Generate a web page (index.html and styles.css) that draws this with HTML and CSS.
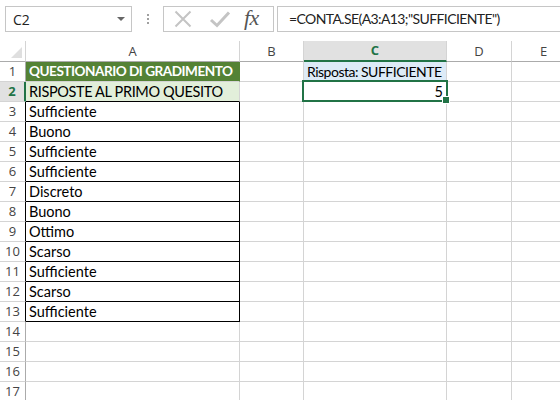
FILE: index.html
```html
<!DOCTYPE html>
<html>
<head>
<meta charset="utf-8">
<link rel="stylesheet" href="styles.css">
</head>
<body>
<div class="topbar">
  <div class="namebox"><span class="nb-text">C2</span><span class="nb-arrow"></span></div>
  <div class="dots"><i></i><i></i><i></i></div>
  <div class="fxbox">
    <svg class="ic-x" width="18" height="18" viewBox="0 0 18 18"><path d="M1.5 1.5L16.5 16.5M16.5 1.5L1.5 16.5" stroke="#c4c4c4" stroke-width="2" fill="none"/></svg>
    <svg class="ic-check" width="22" height="18" viewBox="0 0 22 18"><path d="M2 10L8 15.5L20 2.5" stroke="#c4c4c4" stroke-width="3" fill="none"/></svg>
    <span class="fx">fx</span>
  </div>
  <div class="formula">=CONTA.SE(A3:A13;"SUFFICIENTE")</div>
</div>
<div class="sheet">
  <div class="hd corner"><span class="tri"></span></div><div class="hd col">A</div><div class="hd col">B</div><div class="hd col sel">C</div><div class="hd col">D</div><div class="hd col">E</div>

  <div class="rh">1</div><div class="c title">QUESTIONARIO DI GRADIMENTO</div><div class="c"></div><div class="c blue">Risposta: SUFFICIENTE</div><div class="c"></div><div class="c"></div>
  <div class="rh selr">2</div><div class="c sub">RISPOSTE AL PRIMO QUESITO</div><div class="c"></div><div class="c num active">5<span class="handle"></span></div><div class="c"></div><div class="c"></div>
  <div class="rh edge">3</div><div class="c box">Sufficiente</div><div class="c"></div><div class="c"></div><div class="c"></div><div class="c"></div>
  <div class="rh edge">4</div><div class="c box">Buono</div><div class="c"></div><div class="c"></div><div class="c"></div><div class="c"></div>
  <div class="rh edge">5</div><div class="c box">Sufficiente</div><div class="c"></div><div class="c"></div><div class="c"></div><div class="c"></div>
  <div class="rh edge">6</div><div class="c box">Sufficiente</div><div class="c"></div><div class="c"></div><div class="c"></div><div class="c"></div>
  <div class="rh edge">7</div><div class="c box">Discreto</div><div class="c"></div><div class="c"></div><div class="c"></div><div class="c"></div>
  <div class="rh edge">8</div><div class="c box">Buono</div><div class="c"></div><div class="c"></div><div class="c"></div><div class="c"></div>
  <div class="rh edge">9</div><div class="c box">Ottimo</div><div class="c"></div><div class="c"></div><div class="c"></div><div class="c"></div>
  <div class="rh edge">10</div><div class="c box">Scarso</div><div class="c"></div><div class="c"></div><div class="c"></div><div class="c"></div>
  <div class="rh edge">11</div><div class="c box">Sufficiente</div><div class="c"></div><div class="c"></div><div class="c"></div><div class="c"></div>
  <div class="rh edge">12</div><div class="c box">Scarso</div><div class="c"></div><div class="c"></div><div class="c"></div><div class="c"></div>
  <div class="rh edge">13</div><div class="c box">Sufficiente</div><div class="c"></div><div class="c"></div><div class="c"></div><div class="c"></div>
  <div class="rh">14</div><div class="c"></div><div class="c"></div><div class="c"></div><div class="c"></div><div class="c"></div>
  <div class="rh">15</div><div class="c"></div><div class="c"></div><div class="c"></div><div class="c"></div><div class="c"></div>
  <div class="rh">16</div><div class="c"></div><div class="c"></div><div class="c"></div><div class="c"></div><div class="c"></div>
  <div class="rh">17</div><div class="c"></div><div class="c"></div><div class="c"></div><div class="c"></div><div class="c"></div>
</div>
</body>
</html>
```
FILE: styles.css
```css
html, body {
  margin: 0;
  padding: 0;
  background: #fff;
  overflow: hidden;
}
body {
  width: 560px;
  height: 400px;
  font-family: "Open Sans", "Liberation Sans", sans-serif;
}
.topbar {
  height: 41px;
  display: flex;
  align-items: flex-start;
  padding-top: 6px;
  box-sizing: border-box;
}
.namebox {
  margin-left: 5px;
  width: 127px;
  height: 26px;
  box-sizing: border-box;
  border: 1px solid #c6c6c6;
  display: flex;
  align-items: center;
  justify-content: space-between;
  padding: 0 6px 0 7px;
}
.nb-text {
  font-size: 14px;
  color: #222;
  font-family: "Open Sans", sans-serif;
}
.nb-arrow {
  width: 0;
  height: 0;
  border-left: 4px solid transparent;
  border-right: 4px solid transparent;
  border-top: 4px solid #666;
}
.dots {
  width: 31px;
  height: 26px;
  display: flex;
  flex-direction: column;
  align-items: center;
  justify-content: center;
  gap: 2px;
}
.dots i {
  display: block;
  width: 2px;
  height: 2px;
  background: #a0a0a0;
}
.fxbox {
  width: 111px;
  height: 26px;
  box-sizing: border-box;
  border: 1px solid #c6c6c6;
  display: flex;
  align-items: center;
  padding-left: 10px;
}
.ic-x { margin-right: 17px; }
.ic-check { margin-right: 13px; }
.fx {
  font-family: "Liberation Serif", serif;
  font-style: italic;
  font-size: 22px;
  color: #555;
  line-height: 1;
  margin-top: -3px;
  letter-spacing: -0.5px;
}
.formula {
  margin-left: 3px;
  flex: 1;
  height: 26px;
  box-sizing: border-box;
  border: 1px solid #c6c6c6;
  border-right: none;
  padding-left: 11px;
  font-family: "Lato", sans-serif;
  font-size: 14px;
  letter-spacing: -0.6px;
  color: #222;
  line-height: 24px;
  white-space: nowrap;
}
.sheet {
  display: grid;
  grid-template-columns: 26px 214px 64px 143px 65px 64px;
  grid-template-rows: 21px repeat(17, 20px);
}
.sheet > div {
  box-sizing: border-box;
  border-right: 1px solid #d4d4d4;
  border-bottom: 1px solid #d4d4d4;
  white-space: nowrap;
  overflow: visible;
}
.hd {
  font-family: "Open Sans", sans-serif;
  font-size: 13px;
  color: #444;
  text-align: center;
  line-height: 20px;
  border-bottom-color: #ababab !important;
}
.corner { position: relative; }
.tri {
  position: absolute;
  right: 3px;
  bottom: 3px;
  width: 0;
  height: 0;
  border-left: 11px solid transparent;
  border-bottom: 11px solid #dfdfdf;
}
.hd.sel {
  background: #e1e1e1;
  color: #217346;
  font-weight: bold;
  border-bottom: 2px solid #217346 !important;
  line-height: 19px;
}
.rh {
  font-family: "Open Sans", sans-serif;
  font-size: 13px;
  color: #444;
  text-align: center;
  line-height: 19px;
  border-right-color: #ababab !important;
}
.rh.selr {
  background: #e1e1e1;
  color: #217346;
  font-weight: bold;
  border-right: 2px solid #217346 !important;
}
.rh.edge {
  border-right-color: #000 !important;
}
.c {
  font-family: "Lato", sans-serif;
  font-size: 14.5px;
  color: #000;
  padding-left: 3px;
  line-height: 19px;
}
.title {
  background: #548235;
  color: #fff;
  font-weight: bold;
  font-size: 13.6px;
  letter-spacing: -0.5px;
  border-right-color: #548235 !important;
}
.sub {
  background: #e2efda;
  letter-spacing: -0.36px;
  border-bottom-color: #000 !important;
}
.box {
  border-right-color: #000 !important;
  border-bottom-color: #000 !important;
}
.blue {
  background: #ddebf7;
  font-size: 14px;
  letter-spacing: -0.5px;
}
.num {
  text-align: right;
  padding-right: 3px;
}
.active {
  position: relative;
}
.active::after {
  content: "";
  position: absolute;
  left: -2px;
  top: -2px;
  right: -2px;
  bottom: -1px;
  border: 2px solid #217346;
}
.handle {
  position: absolute;
  right: -4px;
  bottom: -3px;
  width: 6px;
  height: 6px;
  background: #217346;
  border: 1px solid #fff;
  z-index: 2;
}
```
